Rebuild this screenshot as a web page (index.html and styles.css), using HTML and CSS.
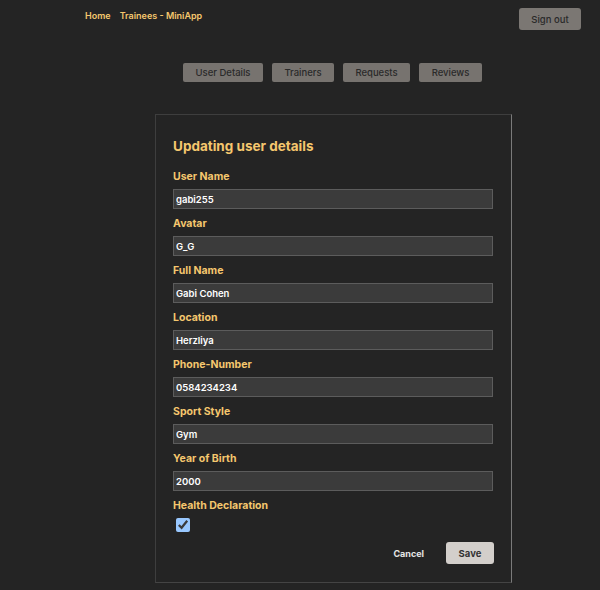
FILE: index.html
```html
<!DOCTYPE html>
<html lang="en">
<head>
<meta charset="utf-8">
<title>Trainees - MiniApp</title>
<link rel="stylesheet" href="styles.css">
</head>
<body>
<header class="topbar">
  <nav class="links">
    <a class="link" href="#">Home</a>
    <a class="link" href="#">Trainees - MiniApp</a>
  </nav>
  <button class="signout" type="button">Sign out</button>
</header>
<div class="tabs">
  <button class="tab" type="button">User Details</button>
  <button class="tab" type="button">Trainers</button>
  <button class="tab" type="button">Requests</button>
  <button class="tab" type="button">Reviews</button>
</div>
<main class="card">
  <h1 class="title">Updating user details</h1>
  <div class="field"><label class="label">User Name</label><input class="input" value="gabi255"></div>
  <div class="field"><label class="label">Avatar</label><input class="input" value="G_G"></div>
  <div class="field"><label class="label">Full Name</label><input class="input" value="Gabi Cohen"></div>
  <div class="field"><label class="label">Location</label><input class="input" value="Herzliya"></div>
  <div class="field"><label class="label">Phone-Number</label><input class="input" value="0584234234"></div>
  <div class="field"><label class="label">Sport Style</label><input class="input" value="Gym"></div>
  <div class="field"><label class="label">Year of Birth</label><input class="input" value="2000"></div>
  <div class="field"><label class="label">Health Declaration</label><input class="check" type="checkbox" checked></div>
  <div class="actions">
    <button class="cancel" type="button">Cancel</button>
    <button class="save" type="button">Save</button>
  </div>
</main>
</body>
</html>
```
FILE: styles.css
```css
* { box-sizing: border-box; }
html, body {
  margin: 0;
  background: #242424;
  font-family: Inter, "Noto Sans", sans-serif;
  color-scheme: dark;
}
.topbar {
  display: flex;
  justify-content: space-between;
  align-items: flex-start;
  padding: 8px 19px 0 85px;
  height: 30px;
}
.links {
  display: flex;
  gap: 9px;
  padding-top: 2px;
}
.link {
  color: #f5c76e;
  text-decoration: none;
  font-size: 9px;
  font-weight: 600;
  line-height: 12px;
}
.signout {
  width: 62px;
  height: 22px;
  border: none;
  border-radius: 3px;
  background: #7b7773;
  color: #2a2a2a;
  font-family: inherit;
  font-size: 9.5px;
  font-weight: 500;
  padding: 0;
}
.tabs {
  display: flex;
  gap: 9px;
  padding-left: 183px;
  margin-top: 33px;
}
.tab {
  height: 19px;
  border: none;
  border-radius: 2px;
  background: #77736f;
  color: #2a2a2a;
  font-family: inherit;
  font-size: 9.5px;
  font-weight: 500;
  padding: 0;
  white-space: nowrap;
}
.tab:nth-child(1) { width: 80px; }
.tab:nth-child(2) { width: 62px; }
.tab:nth-child(3) { width: 67px; }
.tab:nth-child(4) { width: 63px; }
.card {
  width: 357px;
  margin: 32px 0 0 155px;
  border: 1px solid #3e3e3e;
  border-right-color: #7a7a7a;
  border-bottom-color: #444;
  padding: 23px 17px 18px 17px;
}
.title {
  margin: 0 0 15px;
  color: #f5c76e;
  font-size: 13.5px;
  font-weight: 700;
  line-height: 17px;
}
.field {
  display: flex;
  flex-direction: column;
  margin-bottom: 8px;
}
.label {
  color: #f5c76e;
  font-size: 10.5px;
  font-weight: 700;
  line-height: 14px;
  margin-bottom: 5px;
}
.input {
  width: 320px;
  height: 20px;
  background: #3b3b3b;
  border: 1px solid #5c5c5c;
  color: #ffffff;
  font-family: inherit;
  font-size: 9.5px;
  font-weight: 600;
  padding: 0 2px;
  outline: none;
}
.check {
  width: 14px;
  height: 14px;
  margin: 0 0 0 3px;
  accent-color: #99c8ff;
}
.actions {
  display: flex;
  justify-content: flex-end;
  align-items: center;
  gap: 22px;
  margin-top: 10px;
}
.cancel {
  background: none;
  border: none;
  color: #e6e6e6;
  font-family: inherit;
  font-size: 9px;
  font-weight: 700;
  padding: 0;
}
.save {
  width: 48px;
  height: 22px;
  border: none;
  border-radius: 3px;
  background: #d3cfcb;
  color: #333;
  font-family: inherit;
  font-size: 9.5px;
  font-weight: 700;
  padding: 0;
}
```
